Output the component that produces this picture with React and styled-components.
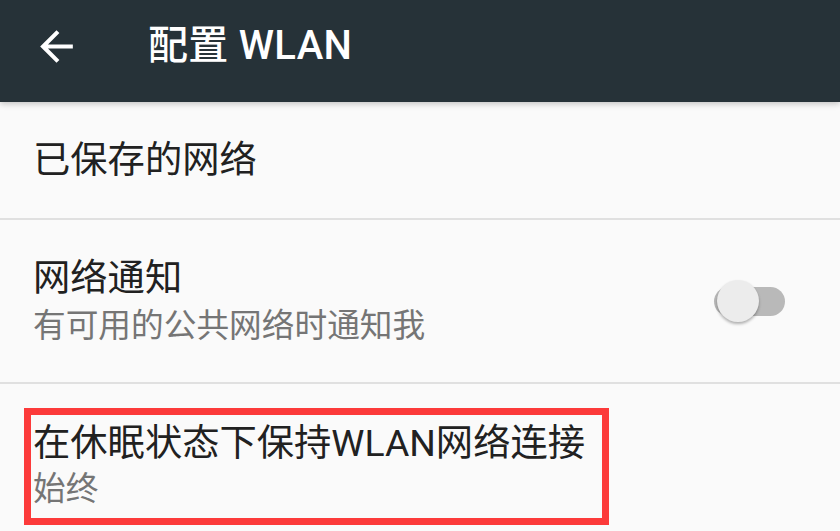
import React from "react";
import styled, { createGlobalStyle } from "styled-components";

const Global = createGlobalStyle`
  html, body { margin: 0; padding: 0; background: #fafafa; }
  body {
    width: 840px; height: 531px; overflow: hidden;
    font-family: Roboto, "Noto Sans CJK SC", "Noto Sans", sans-serif;
  }
`;

const Screen = styled.div`
  width: 840px;
  height: 531px;
  background: #fafafa;
  display: flex;
  flex-direction: column;
  overflow: hidden;
`;

const Toolbar = styled.header`
  height: 102px;
  flex: none;
  background: #263238;
  display: flex;
  align-items: center;
  padding: 0 0 10px 32px;
  box-sizing: border-box;
  box-shadow: 0 2px 6px rgba(0, 0, 0, 0.22);
  position: relative;
  z-index: 1;
`;

const BackButton = styled.button`
  width: 49px;
  height: 49px;
  padding: 0;
  border: none;
  background: none;
  display: flex;
  color: #fff;
`;

const Title = styled.h1`
  margin: 0 0 0 67px;
  font-size: 40px;
  font-weight: 500;
  color: #fff;
  line-height: 1;
  letter-spacing: 0.3px;
`;

const List = styled.div`
  display: flex;
  flex-direction: column;
`;

const Row = styled.div`
  height: ${(p) => p.$h}px;
  flex: none;
  display: flex;
  align-items: center;
  padding: 0 55px 0 33px;
  border-bottom: ${(p) => (p.$last ? "none" : "2px solid #e0e0e0")};
  position: relative;
`;

const Texts = styled.div`
  flex: 1;
  display: flex;
  flex-direction: column;
  gap: ${(p) => p.$gap || 10}px;
`;

const Primary = styled.div`
  font-size: 37.3px;
  line-height: 40px;
  color: #212121;
`;

const Secondary = styled.div`
  font-size: 32.7px;
  line-height: 36px;
  color: #757575;
`;

const SwitchTrack = styled.div`
  width: 71px;
  height: 29px;
  border-radius: 15px;
  background: #b9b9b9;
  position: relative;
  flex: none;
`;

const SwitchThumb = styled.div`
  position: absolute;
  left: 3px;
  top: -7px;
  width: 42px;
  height: 42px;
  border-radius: 50%;
  background: #ececec;
  box-shadow: 0 2px 3px rgba(0, 0, 0, 0.3);
`;

const Highlight = styled.div`
  position: absolute;
  left: 24px;
  top: 24px;
  width: 585px;
  height: 117px;
  box-sizing: border-box;
  border: 7px solid #fc3a3a;
  pointer-events: none;
`;

export default function App() {
  return (
    <Screen>
      <Global />
      <Toolbar>
        <BackButton aria-label="back">
          <svg width="49" height="49" viewBox="0 0 24 24" fill="currentColor">
            <path d="M20 11H7.83l5.59-5.59L12 4l-8 8 8 8 1.41-1.41L7.83 13H20v-2z" />
          </svg>
        </BackButton>
        <Title>配置 WLAN</Title>
      </Toolbar>
      <List>
        <Row $h={116}>
          <Texts>
            <Primary>已保存的网络</Primary>
          </Texts>
        </Row>
        <Row $h={162}>
          <Texts>
            <Primary>网络通知</Primary>
            <Secondary>有可用的公共网络时通知我</Secondary>
          </Texts>
          <SwitchTrack>
            <SwitchThumb />
          </SwitchTrack>
        </Row>
        <Row $h={162} $last>
          <Texts $gap={8}>
            <Primary>在休眠状态下保持WLAN网络连接</Primary>
            <Secondary>始终</Secondary>
          </Texts>
          <Highlight />
        </Row>
      </List>
    </Screen>
  );
}
